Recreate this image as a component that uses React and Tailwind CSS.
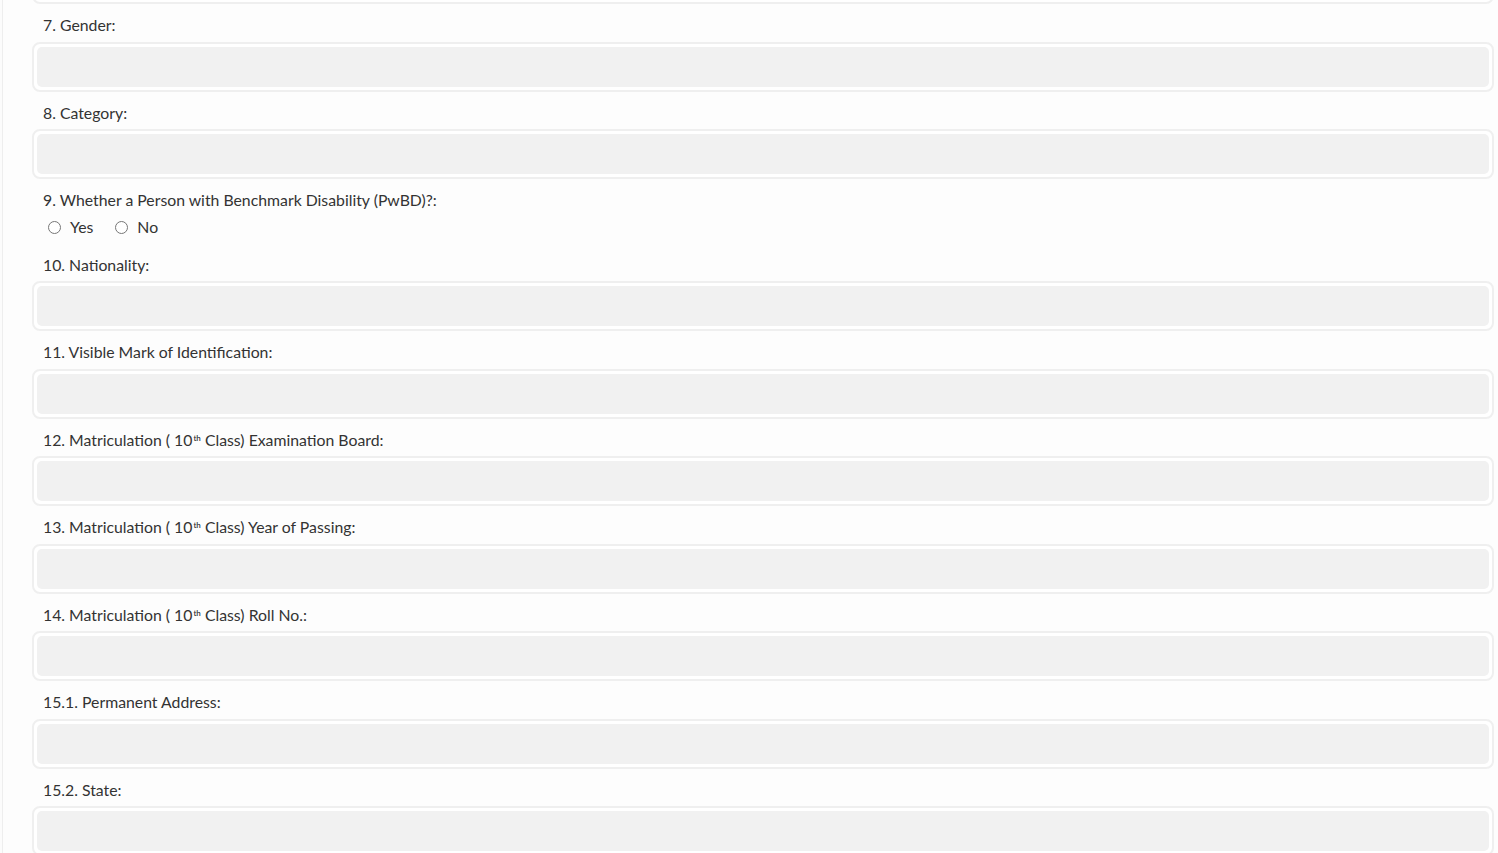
import React from "react";

const Th = () => <sup className="text-[8px] font-semibold -top-[5px] ml-[1px]">th</sup>;

function Label({ children }) {
	return <div className="pt-[11px] pb-[6.5px] leading-5 text-[15.8px] text-[#333] px-[11px]">{children}</div>;
}

function Box() {
	return (
		<div className="border-2 border-[#efefef] rounded-[8px] p-[3px] bg-white">
			<div className="h-[40px] bg-[#f1f1f1] rounded-[5px]" />
		</div>
	);
}

function Field({ label }) {
	return (
		<div>
			<Label>{label}</Label>
			<Box />
		</div>
	);
}

export default function App() {
	return (
		<div className="min-h-screen bg-[#fcfcfc] overflow-hidden" style={{ fontFamily: "Lato, 'Noto Sans', sans-serif" }}>
			<div className="ml-[2px] border-l border-[#eeeeee] bg-[#fdfdfd] pl-[29px] pr-[4px] -mt-[46px] min-h-screen">
				<Box />
				<Field label="7. Gender:" />
				<Field label="8. Category:" />
				<div>
					<Label>9. Whether a Person with Benchmark Disability (PwBD)?:</Label>
					<div className="flex items-center gap-[4px] px-[16px] h-[20px] text-[15.8px] text-[#333]">
						<label className="flex items-center gap-[9px] mr-[18px]">
							<input type="radio" name="pwbd" className="m-0 w-[13px] h-[13px] mt-[2px]" />
							<span>Yes</span>
						</label>
						<label className="flex items-center gap-[9px]">
							<input type="radio" name="pwbd" className="m-0 w-[13px] h-[13px] mt-[2px]" />
							<span>No</span>
						</label>
					</div>
				</div>
				<div className="pt-[7px]">
					<Field label="10. Nationality:" />
				</div>
				<Field label="11. Visible Mark of Identification:" />
				<Field label={<>12. Matriculation ( 10<Th /> Class) Examination Board:</>} />
				<Field label={<>13. Matriculation ( 10<Th /> Class) Year of Passing:</>} />
				<Field label={<>14. Matriculation ( 10<Th /> Class) Roll No.:</>} />
				<Field label="15.1. Permanent Address:" />
				<Field label="15.2. State:" />
			</div>
		</div>
	);
}
